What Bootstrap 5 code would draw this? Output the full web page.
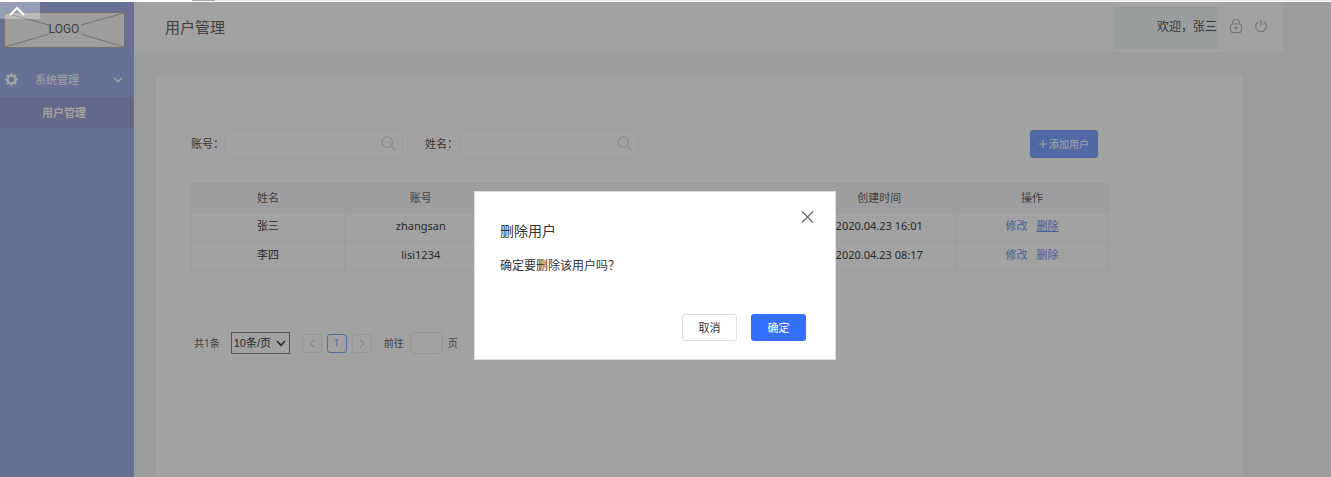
<!DOCTYPE html>
<html lang="zh-CN">
<head>
<meta charset="utf-8">
<meta name="viewport" content="width=device-width, initial-scale=1">
<title>用户管理</title>
<link href="https://cdn.jsdelivr.net/npm/bootstrap@5.3.0/dist/css/bootstrap.min.css" rel="stylesheet">
<style>
body { font-family: "Noto Sans", "Noto Sans CJK SC", sans-serif; font-size: 11px; line-height: 16px; color: #333; }
.top-strip { height: 2px; padding-left: 192px; }
.top-strip span { width: 23px; height: 1px; background: #a9a9a9; }
.top-strip i { background: #e9e9ec; height: 1px; }
.app-shell { background: #f5f7fa; }
.side { width: 134px; background: #a2b2ed; color: #fff; padding-top: 10px; }
.logo-box { margin: 0 9px 0 4px; height: 36px; }
.logo-box svg { width: 100%; height: 100%; display: block; }
.side a { color: #fff; text-decoration: none; }
.side-group { height: 31px; margin: 16px 0 2px; padding: 0 11px 0 5px; }
.side-group .label-text { margin-left: 17px; }
.side-item { height: 31px; background: #9aa6d8; font-weight: 700; padding-left: 42px; margin-right: 1px; }
.topbar { height: 50px; margin-right: 48px; padding-left: 31px; padding-right: 14px; background: #fff; }
.topbar h1 { font-size: 15px; line-height: 20px; font-weight: 400; color: #666; }
.welcome { width: 104px; height: 43px; background: #f0f8f9; color: #555; font-size: 12px; margin-right: 10px; padding-right: 1px; }
.icon-btn { background: none; border: 0; padding: 0; display: flex; }
.icon-btn + .icon-btn { margin-left: 9px; }
.panel { margin: 23px 88px 0 22px; padding: 54px 134px 0 35px; background: #fff; box-shadow: 0 0 3px rgba(0,0,0,.04); }
.tools label { color: #555; width: 33px; }
.tools .gap-label { width: 35px; margin-left: 22px; }
.search-field { width: 179px; }
.search-field input { height: 30px; width: 100%; border: 1px solid #f6f6f8; border-radius: 4px; padding: 0 30px 0 8px; }
.search-field svg { right: 7px; top: 7px; }
.btn-add { width: 68px; height: 28px; padding: 0; font-size: 10px; line-height: 16px; background: #7fa6ff; color: #fff; border: 0; border-radius: 3px; margin-right: 11px; }
.btn-add svg { margin-right: 2px; }
.users { margin-top: 24px; table-layout: fixed; }
.users th, .users td { height: 29px; padding: 0; border: 1px solid #f6f6f8; text-align: center; vertical-align: middle; font-weight: 400; line-height: 16px; }
.users td { color: #444; background: #fff; padding-bottom: 2px; }
.users th { background: #f9f9fc; color: #666; }
.users a { color: #7099f2; text-decoration: none; }
.users a.active { text-decoration: underline; }
.users a + a { margin-left: 9px; }
.pager { margin-top: 61px; padding-left: 3px; font-size: 10px; color: #666; }
.pager select { width: 59px; height: 22px; margin: 0 12px 0 11px; border: 1px solid #888; border-radius: 0; padding: 0 0 0 2px; font-family: "Liberation Sans", "Noto Sans CJK SC", sans-serif; font-size: 11px; color: #444; appearance: none;
  background: #fff url("data:image/svg+xml,%3Csvg xmlns='http://www.w3.org/2000/svg' viewBox='0 0 10 7'%3E%3Cpath d='M1 1l4 4.3L9 1' fill='none' stroke='%23444' stroke-width='1.6'/%3E%3C/svg%3E") no-repeat right 3px center / 10px 7px; }
.page-btn { width: 20px; height: 19px; margin-right: 5px; padding: 0; border: 1px solid #eee; border-radius: 3px; background: #fff; color: #bbb; font-size: 10px; line-height: 16px; }
.page-btn.on { border-color: #7fa6ff; color: #7fa6ff; }
.page-btn svg { display: block; margin: auto; }
.pager label { margin-left: 7px; }
.goto { width: 33px; height: 22px; border: 1px solid #ececf0; border-radius: 5px; margin: 0 5px 0 6px; padding: 0 4px; }
.shade { position: fixed; inset: 2px 0 0 0; background: rgba(0,0,0,.365); padding: 189px 21px 0 0; }
.confirm { width: 362px; background: #fff; border: 1px solid #dcdcdc; padding: 18px 29px 18px 25px; color: #333; }
.confirm h2 { font-size: 14px; line-height: 20px; font-weight: 400; margin: 0 0 16px; }
.confirm p { font-size: 12px; line-height: 18px; margin: 0 0 39px; }
.confirm .close-x { background: none; border: 0; padding: 0; margin: 0 -8px -3px 0; display: block; height: 14px; }
.confirm .actions { gap: 14px; }
.confirm .btn { width: 55px; height: 27px; padding: 0; font-size: 11px; line-height: 16px; border-radius: 3px; }
.confirm .btn-cancel { border: 1px solid #dfdfdf; background: #fff; color: #333; }
.confirm .btn-ok { background: #3370ff; color: #fff; border: 0; }
.fold-tab { position: fixed; left: 0; top: 2px; width: 40px; height: 17px; border: 0; padding: 0 0 0 9px; background: rgba(255,255,255,.3); }
</style>
</head>
<body class="vh-100 d-flex flex-column overflow-hidden bg-white">
<div class="top-strip d-flex"><span></span><i class="flex-fill"></i></div>
<div class="app-shell d-flex flex-fill">
  <nav class="side flex-shrink-0">
    <div class="logo-box">
      <svg viewBox="0 0 121 36" preserveAspectRatio="none" role="img" aria-label="LOGO">
        <rect x=".5" y=".5" width="120" height="35" fill="#f8f8f8" stroke="#b4b4b4"/>
        <path d="M1 1L45 13M120 1L77 13M1 35L45 22M120 35L77 22" stroke="#b4b4b4" fill="none"/>
        <text x="60" y="21" text-anchor="middle" font-family="Roboto, sans-serif" font-size="12" fill="#666">LOGO</text>
      </svg>
    </div>
    <a href="#" class="side-group d-flex align-items-center">
      <svg width="13" height="13" viewBox="0 0 13 13"><circle cx="6.5" cy="6.5" r="3.8" fill="none" stroke="#fff" stroke-width="2.2"/><path d="M6.5 .3v2M6.5 10.7v2M.3 6.5h2M10.7 6.5h2M2 2l1.4 1.4M9.6 9.6l1.4 1.4M2 11l1.4-1.4M9.6 3.4l1.4-1.4" stroke="#fff" stroke-width="2.6"/></svg>
      <span class="label-text me-auto">系统管理</span>
      <svg width="10" height="6" viewBox="0 0 10 6"><path d="M1 1l4 3.6L9 1" fill="none" stroke="#fff" stroke-width="1.4"/></svg>
    </a>
    <a href="#" class="side-item d-flex align-items-center">用户管理</a>
  </nav>
  <main class="flex-fill d-flex flex-column">
    <header class="topbar d-flex align-items-center">
      <h1 class="mb-0 me-auto">用户管理</h1>
      <span class="welcome d-flex align-items-center justify-content-end">欢迎，张三</span>
      <button class="icon-btn" type="button" aria-label="锁定">
        <svg width="16" height="18" viewBox="0 0 16 18" fill="none" stroke="#bbb" stroke-width="1.2"><rect x="2.5" y="6" width="11" height="8.5" rx="2.5"/><path d="M4.5 6V5a3.5 3.5 0 0 1 7 0v1"/><circle cx="8" cy="10" r="1" fill="#bbb"/></svg>
      </button>
      <button class="icon-btn" type="button" aria-label="退出">
        <svg width="16" height="18" viewBox="0 0 16 18" fill="none" stroke="#bbb" stroke-width="1.3"><path d="M4.9 4a5.3 5.3 0 1 0 6.2 0M8 2v6"/></svg>
      </button>
    </header>
    <section class="panel flex-fill">
      <div class="tools d-flex align-items-center">
        <label for="acc">账号：</label>
        <div class="search-field position-relative">
          <input id="acc" type="text">
          <svg class="position-absolute" width="15" height="15" viewBox="0 0 15 15" fill="none" stroke="#dcdcdc" stroke-width="1.2"><circle cx="6.2" cy="6.2" r="5.3"/><path d="M10 10l4.2 4.2"/></svg>
        </div>
        <label for="nam" class="gap-label">姓名：</label>
        <div class="search-field position-relative">
          <input id="nam" type="text">
          <svg class="position-absolute" width="15" height="15" viewBox="0 0 15 15" fill="none" stroke="#dcdcdc" stroke-width="1.2"><circle cx="6.2" cy="6.2" r="5.3"/><path d="M10 10l4.2 4.2"/></svg>
        </div>
        <button type="button" class="btn btn-add ms-auto d-flex align-items-center justify-content-center"><svg width="8" height="8" viewBox="0 0 8 8"><path d="M4 0v8M0 4h8" stroke="#fff"/></svg>添加用户</button>
      </div>
      <table class="table users mb-0">
        <thead><tr><th>姓名</th><th>账号</th><th></th><th></th><th>创建时间</th><th>操作</th></tr></thead>
        <tbody>
          <tr><td>张三</td><td>zhangsan</td><td></td><td></td><td>2020.04.23 16:01</td><td><a href="#">修改</a><a href="#" class="active">删除</a></td></tr>
          <tr><td>李四</td><td>lisi1234</td><td></td><td></td><td>2020.04.23 08:17</td><td><a href="#">修改</a><a href="#">删除</a></td></tr>
        </tbody>
      </table>
      <div class="pager d-flex align-items-center">
        <span>共1条</span>
        <select aria-label="每页条数"><option>10条/页</option></select>
        <button type="button" class="page-btn" aria-label="上一页"><svg width="6" height="9" viewBox="0 0 6 9"><path d="M5 1L1 4.5 5 8" fill="none" stroke="#c8c8c8"/></svg></button>
        <button type="button" class="page-btn on">1</button>
        <button type="button" class="page-btn" aria-label="下一页"><svg width="6" height="9" viewBox="0 0 6 9"><path d="M1 1l4 3.5L1 8" fill="none" stroke="#c8c8c8"/></svg></button>
        <label for="pg">前往</label>
        <input id="pg" class="goto" type="text">
        <span>页</span>
      </div>
    </section>
  </main>
</div>
<div class="shade">
  <div class="confirm mx-auto" role="dialog" aria-modal="true" aria-labelledby="dlg-title">
    <div class="d-flex justify-content-end"><button type="button" class="close-x" aria-label="关闭"><svg class="d-block" width="13" height="14" viewBox="0 0 13 14"><path d="M1 1.5l11 11M12 1.5l-11 11" stroke="#666" stroke-width="1.2"/></svg></button></div>
    <h2 id="dlg-title">删除用户</h2>
    <p>确定要删除该用户吗？</p>
    <div class="actions d-flex justify-content-end">
      <button type="button" class="btn btn-cancel">取消</button>
      <button type="button" class="btn btn-ok">确定</button>
    </div>
  </div>
</div>
<button type="button" class="fold-tab" aria-label="收起"><svg class="d-block" width="16" height="10" viewBox="0 0 16 10"><path d="M1 9l7-7 7 7" fill="none" stroke="#fff" stroke-width="2"/></svg></button>
<script src="https://cdn.jsdelivr.net/npm/bootstrap@5.3.0/dist/js/bootstrap.bundle.min.js"></script>
</body>
</html>
